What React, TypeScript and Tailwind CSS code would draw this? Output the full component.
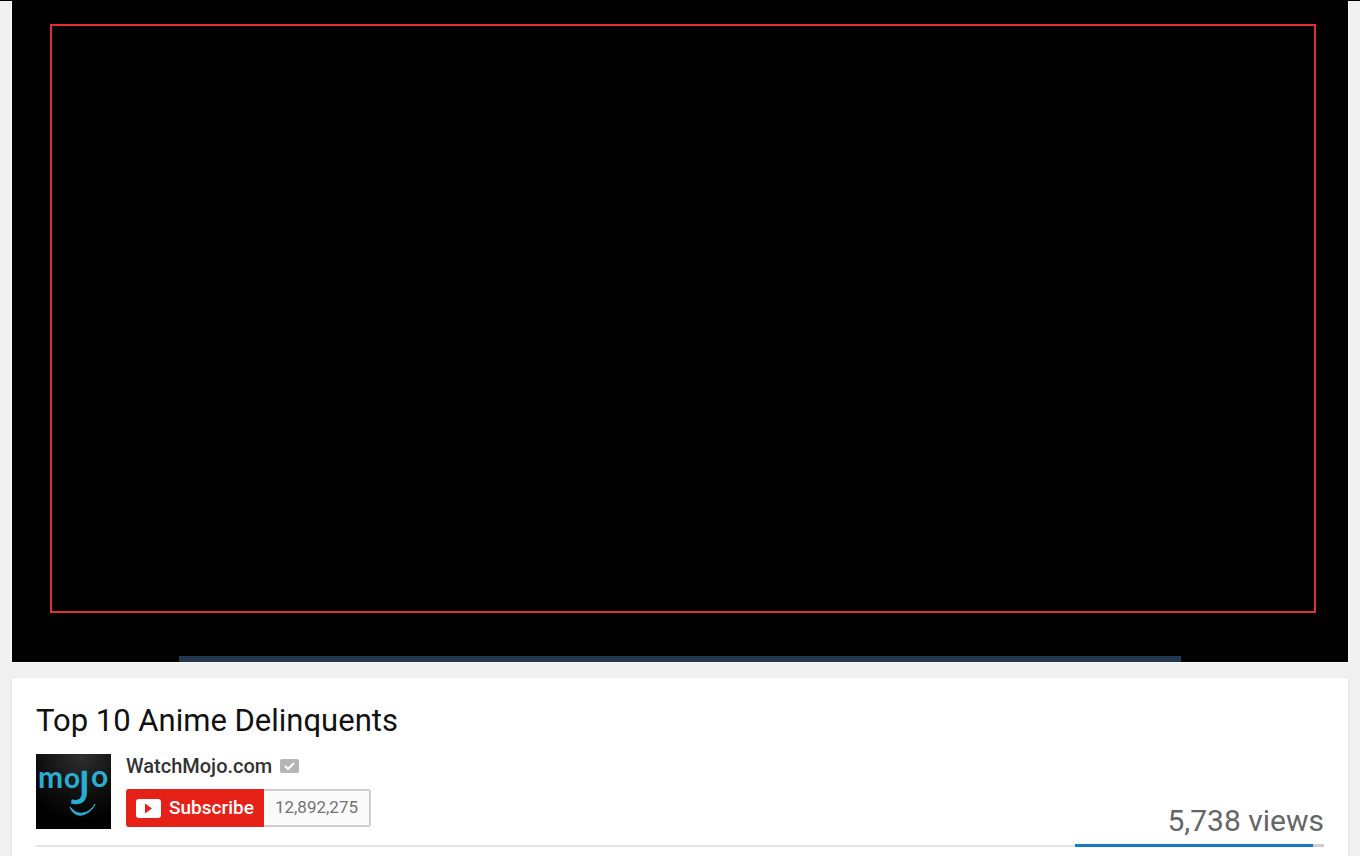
const video = {
  title: "Top 10 Anime Delinquents",
  channel: "WatchMojo.com",
  subscribers: "12,892,275",
  views: "5,738 views",
  likes: 238,
  total: 249,
};

function ChannelLogo() {
  return (
    <svg viewBox="0 0 75 75" className="block size-[75px]" role="img" aria-label="WatchMojo">
      <defs>
        <radialGradient id="logoBg" cx="0.6" cy="0" r="0.9">
          <stop offset="0" stopColor="#303030" />
          <stop offset="0.6" stopColor="#101010" />
          <stop offset="1" stopColor="#000" />
        </radialGradient>
      </defs>
      <rect width="75" height="75" fill="url(#logoBg)" />
      <g className="font-['Lato',sans-serif] font-bold" fill="#2badd0">
        <text x="2" y="34" fontSize="30">m</text>
        <text x="28" y="34" fontSize="28">o</text>
        <text x="35" y="50" fontSize="46" className="font-normal" stroke="#2badd0" strokeWidth="0.6">J</text>
        <text x="55" y="33" fontSize="30">o</text>
      </g>
      <path
        d="M34 53C36 59 41 62 46 61C52 60 57 55 59 50C57 53 54 58 47 59C41 60 38 57 34 53Z"
        fill="#2badd0"
        stroke="#2badd0"
        strokeWidth="1"
        strokeLinejoin="round"
      />
    </svg>
  );
}

function VerifiedBadge() {
  return (
    <svg viewBox="0 0 19 14" className="h-[14px] w-[19px]" role="img" aria-label="Verified">
      <rect width="19" height="14" rx="2" fill="#b5b5b5" />
      <path d="M5 7L8 10L14 4" fill="none" stroke="#fff" strokeWidth="2" />
    </svg>
  );
}

function PlayIcon() {
  return (
    <svg viewBox="0 0 25 19" className="h-[19px] w-[25px]" aria-hidden="true">
      <rect width="25" height="19" rx="3" fill="#fff" />
      <path d="M9 4.5L16 9.5L9 14.5Z" fill="#e62117" />
    </svg>
  );
}

function Player() {
  return (
    <div className="flex h-[661px] flex-col bg-black px-[38px] pt-[23px] shadow-[0_0_0_1px_#fafafa]">
      <div className="mr-[-6px] h-[589px] border-2 border-[#e03030]" />
      <div className="mx-[129px] mt-auto h-[6px] bg-[#23384f]" />
    </div>
  );
}

export default function App() {
  return (
    <div className="min-h-screen overflow-hidden border-t border-black bg-[#f0f0f0] px-3 font-['Roboto',sans-serif]">
      <Player />
      <main className="mt-4 bg-white px-6 pt-[25px] pb-10 shadow-[0_1px_3px_rgba(0,0,0,0.1)]">
        <h1 className="text-[31px] leading-9 text-[#111]">{video.title}</h1>
        <div className="mt-[15px] flex items-start">
          <a href="#channel">
            <ChannelLogo />
          </a>
          <div className="ml-[15px]">
            <div className="flex items-center gap-2">
              <a href="#channel" className="text-[20px] leading-6 font-medium text-[#333]">
                {video.channel}
              </a>
              <VerifiedBadge />
            </div>
            <div className="mt-[11px] flex h-[38px]">
              <button
                type="button"
                className="flex items-center gap-2 rounded-l-[3px] bg-[#e62117] px-[10px] text-[19px] font-medium text-white"
              >
                <PlayIcon />
                Subscribe
              </button>
              <span className="flex items-center rounded-r-[3px] border-2 border-l-0 border-[#ccc] bg-[#fafafa] px-[11px] text-[17px] text-[#737373]">
                {video.subscribers}
              </span>
            </div>
          </div>
          <div className="mt-[49px] ml-auto text-[30px] leading-9 text-[#666]">{video.views}</div>
        </div>
        <div className="mt-[5px] flex items-end">
          <div className="h-[2px] flex-1 bg-[#e4e4e4]" />
          <div className="h-[3px] w-[249px] bg-[#ccc]">
            <div className="h-full bg-[#167ac6]" style={{ width: `${(video.likes / video.total) * 100}%` }} />
          </div>
        </div>
      </main>
    </div>
  );
}
